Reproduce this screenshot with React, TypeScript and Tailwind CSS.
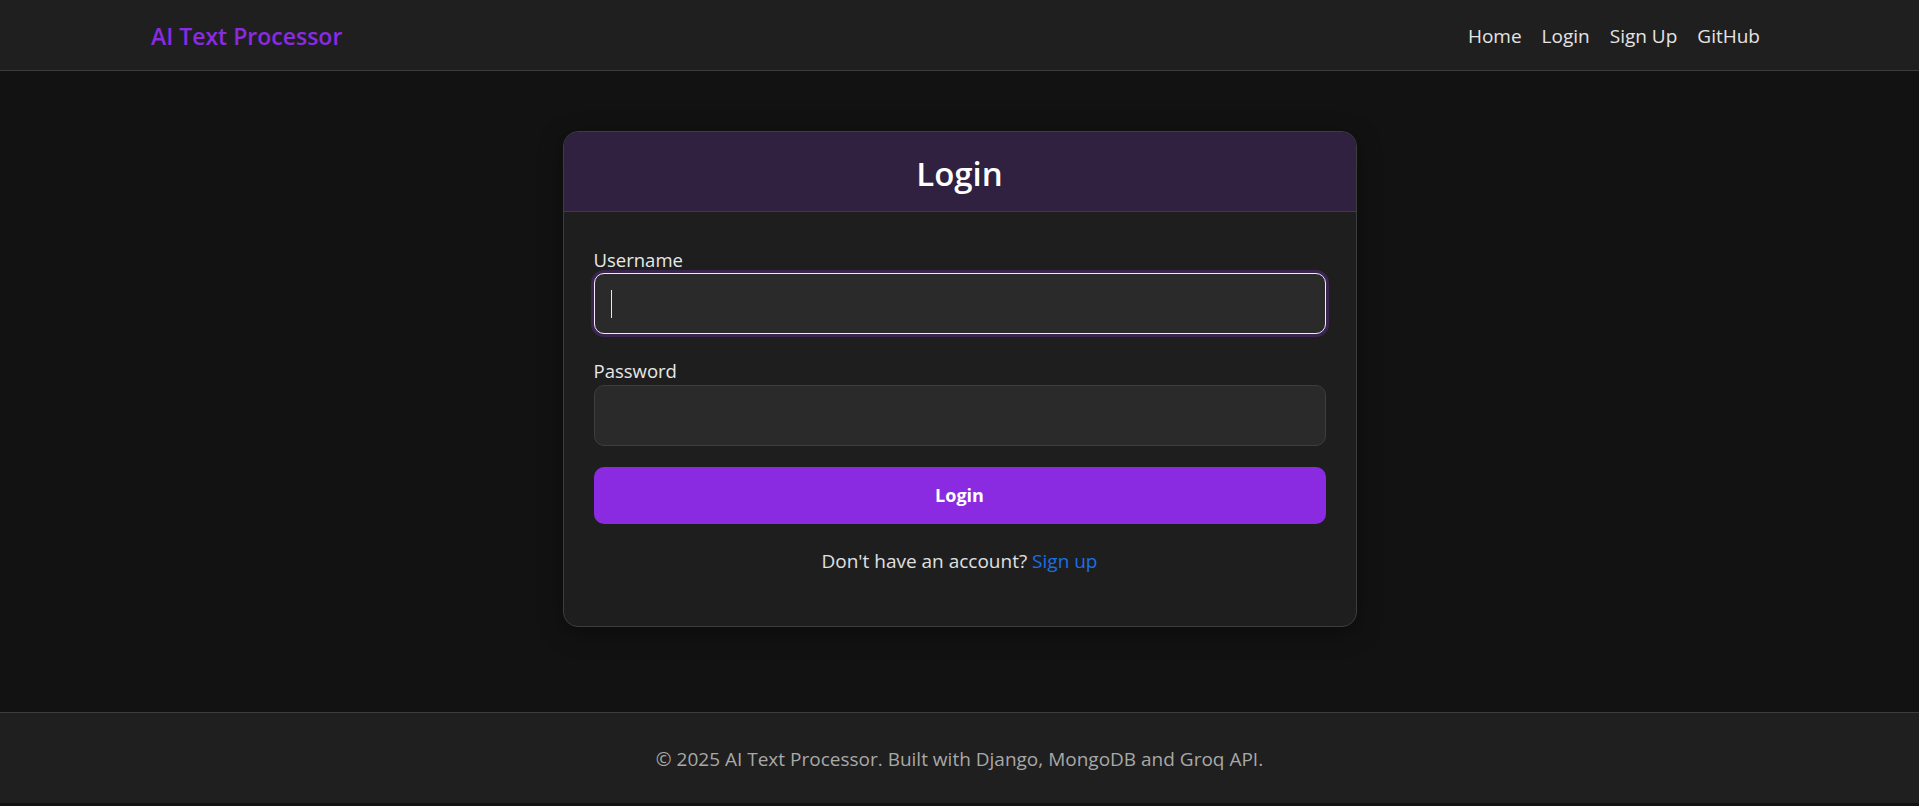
import React from "react";

export default function App() {
  return (
    <div
      className="flex min-h-[806px] flex-col bg-[#121212] text-[#e0e0e0]"
      style={{ fontFamily: '"Open Sans", "Noto Sans", sans-serif' }}
    >
      {/* Navbar */}
      <header className="h-[71px] border-b border-[#3c3c3c] bg-[#1f1f1f]">
        <div className="flex h-[70px] items-center justify-between pt-[2px] pl-[151px] pr-[159px]">
          <a className="text-[23px] font-semibold text-[#8a2be2]">AI Text Processor</a>
          <nav className="flex items-center gap-[20px] text-[19px] text-[#e4e4e4]">
            <a>Home</a>
            <a>Login</a>
            <a>Sign Up</a>
            <a>GitHub</a>
          </nav>
        </div>
      </header>

      {/* Main */}
      <main className="flex flex-1 justify-center pt-[60px] pb-[85px]">
        <div className="w-[794px] overflow-hidden rounded-[15px] border border-[#3d3d3d] bg-[#1e1e1e] shadow-[0_6px_24px_rgba(0,0,0,0.35)]">
          <div className="flex h-[80px] items-center justify-center border-b border-[#3d3d3d] bg-[#302140] pt-[4px]">
            <h2 className="text-[33px] font-semibold leading-none text-white">Login</h2>
          </div>
          <div className="px-[30px] pt-[36px] pb-[51px]">
            <div className="mb-[25px]">
              <label className="mb-[1px] block text-[18.5px] leading-[24px] text-[#e8e8e8]">Username</label>
              <div className="flex h-[61px] items-center rounded-[10px] border border-[#f0eaf8] bg-[#2a2a2a] pl-[16px] shadow-[0_0_0_3px_#3a2450]">
                <span className="block h-[28px] w-[1px] bg-[#e8e8e8]" />
              </div>
            </div>
            <div className="mb-[21px]">
              <label className="mb-[2px] block text-[18.5px] leading-[24px] text-[#e8e8e8]">Password</label>
              <div className="h-[61px] rounded-[10px] border border-[#3e3e3e] bg-[#2a2a2a]" />
            </div>
            <button className="flex h-[57px] w-full items-center justify-center rounded-[10px] bg-[#8a2be2] text-[18px] font-bold text-white">
              Login
            </button>
            <p className="mt-[25px] text-center text-[19px] leading-[24px] text-[#e0e0e0]">
              Don't have an account? <a className="text-[#1a6fe6]">Sign up</a>
            </p>
          </div>
        </div>
      </main>

      {/* Footer */}
      <footer className="flex h-[91px] items-center justify-center border-t border-[#3c3c3c] bg-[#1f1f1f] pt-[3px]">
        <p className="text-[19px] text-[#a8a8a8]">
          © 2025 AI Text Processor. Built with Django, MongoDB and Groq API.
        </p>
      </footer>
      <div className="h-[3px] bg-[#121212]" />
    </div>
  );
}
